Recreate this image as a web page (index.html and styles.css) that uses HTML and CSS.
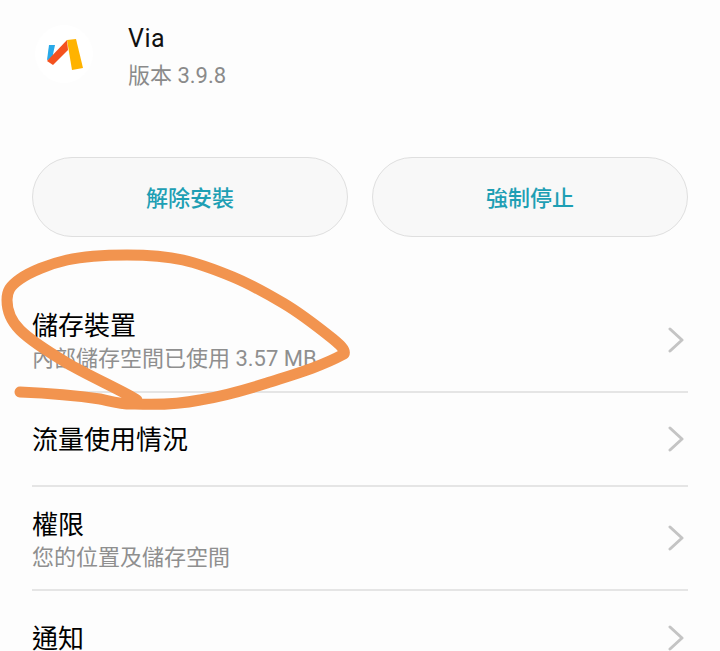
FILE: index.html
```html
<!DOCTYPE html>
<html lang="zh-Hant">
<head>
<meta charset="utf-8">
<title>Via</title>
<link rel="stylesheet" href="styles.css">
</head>
<body>
<main class="screen">
  <header class="app">
    <div class="app-icon">
      <svg viewBox="0 0 58 58" width="58" height="58">
        <path d="M14 20L20 20 17 34 12 35Z" fill="#29a9e8"/>
        <path d="M32 15L12 36 18 40 33 25Z" fill="#f4511e"/>
        <path d="M32 15L41 14 48 43 37 45Z" fill="#ffb300"/>
      </svg>
    </div>
    <div class="app-text">
      <div class="app-name">Via</div>
      <div class="app-version">版本 3.9.8</div>
    </div>
  </header>
  <div class="actions">
    <button class="pill">解除安裝</button>
    <button class="pill">強制停止</button>
  </div>
  <ul class="list">
    <li class="row row-storage">
      <div class="text two"><div class="title">儲存裝置</div><div class="sub">內部儲存空間已使用 3.57 MB</div></div>
      <svg class="chev" viewBox="0 0 16 26" width="16" height="26"><path d="M2 2L14 13 2 24"/></svg>
    </li>
    <li class="row row-traffic">
      <div class="text"><div class="title">流量使用情況</div></div>
      <svg class="chev" viewBox="0 0 16 26" width="16" height="26"><path d="M2 2L14 13 2 24"/></svg>
    </li>
    <li class="row row-perm">
      <div class="text two"><div class="title">權限</div><div class="sub">您的位置及儲存空間</div></div>
      <svg class="chev" viewBox="0 0 16 26" width="16" height="26"><path d="M2 2L14 13 2 24"/></svg>
    </li>
    <li class="row row-notify">
      <div class="text"><div class="title">通知</div></div>
      <svg class="chev" viewBox="0 0 16 26" width="16" height="26"><path d="M2 2L14 13 2 24"/></svg>
    </li>
  </ul>
  <svg class="scribble" viewBox="0 0 720 651" width="720" height="651">
    <path d="M20 392C45 393 80 396 100 399C110 401 122 405 135 404C158 405 180 404 200 400C225 396 245 390 267 383C295 374 320 367 344 354C346 350 339 344 333 339C323 331 300 313 283 303C266 293 250 284 233 277C216 270 201 264 183 260C165 256 146 255 127 255C108 255 85 256 67 260C49 264 30 272 20 279C10 286 7 291 7 300C7 309 10 320 20 330C30 340 47 351 67 363C87 375 125 392 137 400"/>
  </svg>
</main>
</body>
</html>
```
FILE: styles.css
```css
* { box-sizing: border-box; }
html, body { margin: 0; padding: 0; }
body {
  width: 720px;
  height: 651px;
  overflow: hidden;
  background: #fdfdfd;
  font-family: "Roboto", "Noto Sans CJK TC", sans-serif;
}
.screen { position: relative; width: 720px; height: 651px; overflow: hidden; }
.app { display: flex; height: 157px; padding: 25px 0 0 35px; }
.app-icon {
  width: 58px;
  height: 58px;
  border-radius: 50%;
  background: #fff;
  flex: none;
}
.app-text { margin-left: 35px; }
.app-name { font-size: 25px; line-height: 28px; color: #111; letter-spacing: 0.5px; }
.app-version { margin-top: 9px; font-size: 22px; line-height: 28px; color: #8a8a8a; }
.actions { display: flex; gap: 24px; padding: 0 32px; }
.pill {
  flex: 1;
  height: 80px;
  border: 1px solid #dfdfdf;
  border-radius: 40px;
  background: #f8f8f8;
  color: #1e9fb4;
  font: 500 22px "Noto Sans CJK TC", sans-serif;
  padding: 0 0 2px;
}
.list { list-style: none; margin: 0; padding: 0 32px; }
.row {
  display: flex;
  align-items: center;
  justify-content: space-between;
  border-bottom: 2px solid #e5e5e5;
}
.row-storage { height: 156px; padding-top: 51px; }
.row-traffic { height: 94px; }
.row-perm { height: 104px; }
.row-notify { height: 94px; border-bottom: 0; }
.text { padding-top: 2px; }
.two .title { padding-top: 1px; line-height: 35px; }
.title { font-size: 26px; line-height: 34px; color: #000; }
.sub { font-size: 22px; line-height: 28px; color: #8f8f8f; margin-top: 1px; }
.chev { margin-right: 4px; fill: none; stroke: #c4c4c4; stroke-width: 3; stroke-linecap: round; stroke-linejoin: round; }
.scribble { position: absolute; left: 0; top: 0; fill: none; stroke: #f2944f; stroke-width: 11; stroke-linecap: round; stroke-linejoin: round; }
```
